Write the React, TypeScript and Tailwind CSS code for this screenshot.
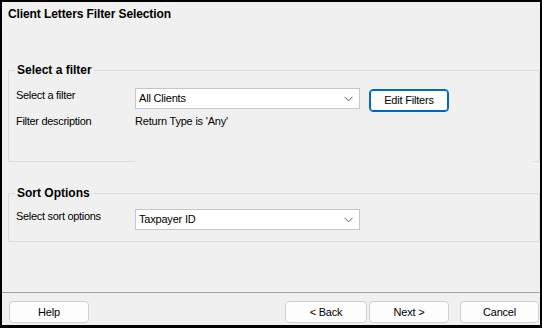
import React from 'react';

const Chevron: React.FC = () => (
  <svg width="9" height="6" viewBox="0 0 9 6" className="shrink-0">
    <path d="M0.5 0.8 L4.5 4.8 L8.5 0.8" fill="none" stroke="#606060" strokeWidth="1" />
  </svg>
);

const Dropdown: React.FC<{ value: string }> = ({ value }) => (
  <div className="w-[225px] h-[21px] bg-white border border-[#c6c6c6] flex items-center justify-between pl-[3px] pr-[6px] text-[11px] tracking-[-0.2px] leading-[19px]">
    <span>{value}</span>
    <Chevron />
  </div>
);

const Button: React.FC<{ label: string; w: string; primary?: boolean }> = ({ label, w, primary }) => (
  <div
    className={`${w} h-[22px] rounded-[4px] bg-[#fdfdfd] flex items-center justify-center text-[11px] tracking-[-0.2px] ${
      primary ? 'border border-[#0067c0] shadow-[inset_0_0_0_1px_#0067c0]' : 'border border-[#d0d0d0]'
    }`}
  >
    {label}
  </div>
);

const Legend: React.FC<{ text: string }> = ({ text }) => (
  <span className="absolute -top-[8px] left-[6px] px-[2px] bg-[#f0f0f0] font-bold text-[12px] leading-[14px]">{text}</span>
);

export default function App() {
  return (
    <div
      className="w-[542px] h-[328px] bg-[#f0f0f0] border-l-2 border-t-2 border-r-2 border-b-[3px] border-black flex flex-col text-black"
      style={{ fontFamily: '"Liberation Sans", Arial, sans-serif' }}
    >
      <div className="flex-1 flex flex-col">
        {/* Title */}
        <div className="pt-[5px] pl-[6px] font-bold text-[12px] leading-[14px] tracking-[-0.1px]">
          Client Letters Filter Selection
        </div>

        {/* Select a filter */}
        <div className="relative mt-[49px] ml-[6px] w-[532px] h-[91px] border-t border-l border-r border-[#dcdcdc]">
          <Legend text="Select a filter" />
          <div className="absolute -bottom-[1px] -left-[1px] w-[127px] h-px bg-[#dcdcdc]" />
          <div className="absolute -bottom-[1px] -right-[1px] w-[7px] h-px bg-[#dcdcdc]" />

          <div className="pt-[17px] pl-[7px] flex flex-col text-[11px] tracking-[-0.3px]">
            <div className="flex items-start h-[24px]">
              <div className="w-[119px] leading-[14px]">Select a filter</div>
              <Dropdown value="All Clients" />
              <div className="ml-[9px] mt-[1px]">
                <Button label="Edit Filters" w="w-[80px] !h-[23px]" primary />
              </div>
            </div>
            <div className="flex mt-[2px] leading-[14px]">
              <div className="w-[119px]">Filter description</div>
              <div className="tracking-[-0.2px]">Return Type is 'Any'</div>
            </div>
          </div>
        </div>

        {/* Sort Options */}
        <div className="relative mt-[32px] ml-[6px] w-[532px] h-[49px] border border-[#dcdcdc]">
          <Legend text="Sort Options" />
          <div className="pt-[15px] pl-[7px] flex items-start text-[11px] tracking-[-0.3px]">
            <div className="w-[119px] leading-[14px]">Select sort options</div>
            <Dropdown value="Taxpayer ID" />
          </div>
        </div>
      </div>

      {/* Footer */}
      <div className="h-[33px] border-t border-[#a0a0a0] pt-[8px] flex items-start">
        <div className="ml-[7px]">
          <Button label="Help" w="w-[80px]" />
        </div>
        <div className="ml-auto flex mr-[1px]">
          <Button label="< Back" w="w-[82px]" />
          <div className="ml-[2px]">
            <Button label="Next >" w="w-[80px]" />
          </div>
          <div className="ml-[11px]">
            <Button label="Cancel" w="w-[79px]" />
          </div>
        </div>
      </div>
    </div>
  );
}
